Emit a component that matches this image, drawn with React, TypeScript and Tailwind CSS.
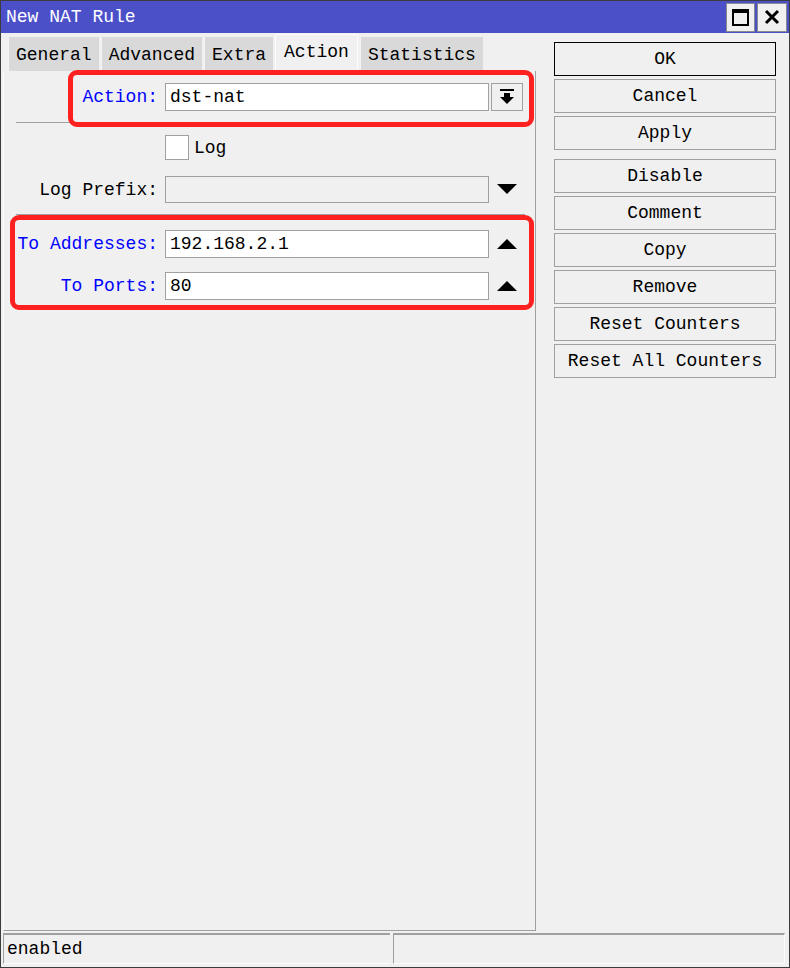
import React from "react";

const buttons = [
  { label: "OK", primary: true },
  { label: "Cancel" },
  { label: "Apply", gapAfter: true },
  { label: "Disable" },
  { label: "Comment" },
  { label: "Copy" },
  { label: "Remove" },
  { label: "Reset Counters" },
  { label: "Reset All Counters" },
];

const tabs = ["General", "Advanced", "Extra", "Action", "Statistics"];

function TriangleDown() {
  return (
    <svg width="20" height="11" viewBox="0 0 20 11">
      <polygon points="0,0 20,0 10,10" fill="#000" />
    </svg>
  );
}

function TriangleUp() {
  return (
    <svg width="20" height="11" viewBox="0 0 20 11">
      <polygon points="0,10 20,10 10,0" fill="#000" />
    </svg>
  );
}

function Row({
  label,
  blue,
  children,
  className = "",
}: {
  label: string;
  blue?: boolean;
  children: React.ReactNode;
  className?: string;
}) {
  return (
    <div className={`flex items-center ${className}`}>
      <div
        className={`w-[154px] text-right ${blue ? "text-[#0000ff]" : "text-black"}`}
      >
        {label}
      </div>
      <div className="ml-[7px] flex items-center">{children}</div>
    </div>
  );
}

export default function App() {
  return (
    <div className="w-[790px] h-[968px] bg-[#f0f0f0] border border-[#3c3c3c] flex flex-col font-['Liberation_Mono',monospace] text-[18px] leading-none text-black overflow-hidden">
      {/* title bar */}
      <div className="h-[32px] bg-[#4b50c9] flex items-center justify-between pl-[5px] pr-[2px] shrink-0">
        <span className="text-white text-[18px]">New NAT Rule</span>
        <div className="flex gap-[2px]">
          <div className="w-[29px] h-[29px] bg-[#f0f0f0] border border-[#8a8a8a] flex items-center justify-center">
            <div className="w-[17px] h-[17px] border-[2px] border-black border-t-[4px]" />
          </div>
          <div className="w-[30px] h-[29px] bg-[#f0f0f0] border border-[#8a8a8a] flex items-center justify-center">
            <svg width="16" height="16" viewBox="0 0 16 16">
              <path d="M2 2 L14 14 M14 2 L2 14" stroke="#000" strokeWidth="3" />
            </svg>
          </div>
        </div>
      </div>

      <div className="flex flex-1 min-h-0">
        {/* left column */}
        <div className="relative w-[535px] pl-[2px] flex flex-col">
          <div className="flex items-end h-[38px] pl-[5px] gap-[2px]">
            {tabs.map((t) =>
              t === "Action" ? (
                <div
                  key={t}
                  className="h-[37px] px-[8px] flex items-center bg-[#f0f0f0] border-t border-l border-r border-[#fcfcfc] pb-[2px]"
                >
                  {t}
                </div>
              ) : (
                <div
                  key={t}
                  className="h-[34px] px-[7px] flex items-center bg-[#d9d9d9] border-l border-[#f4f4f4] pt-[2px]"
                >
                  {t}
                </div>
              )
            )}
          </div>

          <div className="flex-1 border border-t-0 border-l-[#fcfcfc] border-r-[#a0a0a0] border-b-[#a0a0a0] pt-[12px]">
            <Row label="Action:" blue>
              <div className="w-[324px] h-[28px] bg-white border border-[#a0a0a0] flex items-center pl-[4px]">
                dst-nat
              </div>
              <div className="ml-[2px] w-[32px] h-[28px] bg-[#f0f0f0] border border-[#a0a0a0] flex items-center justify-center">
                <svg width="16" height="16" viewBox="0 0 16 16">
                  <rect x="1" y="0" width="14" height="2" fill="#000" />
                  <rect x="5" y="4" width="6" height="4" fill="#000" />
                  <polygon points="1,8 15,8 8,15" fill="#000" />
                </svg>
              </div>
            </Row>

            <div className="mt-[11px] ml-[12px] mr-[10px] h-px bg-[#a0a0a0]" />

            <div className="mt-[12px] flex items-center pl-[161px]">
              <div className="w-[24px] h-[25px] bg-white border border-[#a0a0a0]" />
              <span className="ml-[5px]">Log</span>
            </div>

            <Row label="Log Prefix:" className="mt-[16px]">
              <div className="w-[324px] h-[27px] bg-[#f0f0f0] border border-[#a0a0a0]" />
              <div className="ml-[8px] flex items-center">
                <TriangleDown />
              </div>
            </Row>

            <div className="mt-[11px] ml-[12px] mr-[10px] h-px bg-[#a0a0a0]" />

            <Row label="To Addresses:" blue className="mt-[15px]">
              <div className="w-[324px] h-[28px] bg-white border border-[#a0a0a0] flex items-center pl-[4px]">
                192.168.2.1
              </div>
              <div className="ml-[8px] flex items-center">
                <TriangleUp />
              </div>
            </Row>

            <Row label="To Ports:" blue className="mt-[14px]">
              <div className="w-[324px] h-[28px] bg-white border border-[#a0a0a0] flex items-center pl-[4px]">
                80
              </div>
              <div className="ml-[8px] flex items-center">
                <TriangleUp />
              </div>
            </Row>
          </div>

          {/* highlight boxes */}
          <div className="absolute left-[67px] top-[37px] w-[466px] h-[57px] border-[5px] border-[#ff2020] rounded-[9px] pointer-events-none" />
          <div className="absolute left-[9px] top-[182px] w-[524px] h-[95px] border-[5px] border-[#ff2020] rounded-[9px] pointer-events-none" />
        </div>

        {/* right column */}
        <div className="flex flex-col pt-[9px] pl-[18px]">
          {buttons.map((b) => (
            <div
              key={b.label}
              className={`w-[222px] h-[34px] flex items-center justify-center bg-[#f0f0f0] border ${
                b.primary ? "border-black" : "border-[#a0a0a0]"
              } ${b.gapAfter ? "mb-[9px]" : "mb-[3px]"}`}
            >
              {b.label}
            </div>
          ))}
        </div>
      </div>

      {/* status bar */}
      <div className="h-[31px] mt-[2px] mb-[3px] flex gap-[3px] pl-[2px] pr-[4px] shrink-0">
        <div className="w-[387px] border-t-2 border-l border-[#a0a0a0] border-b border-b-[#fcfcfc] flex items-center pl-[3px]">
          enabled
        </div>
        <div className="flex-1 border-t-2 border-l border-[#a0a0a0] border-b border-b-[#fcfcfc] border-r border-r-[#fcfcfc]" />
      </div>
    </div>
  );
}
